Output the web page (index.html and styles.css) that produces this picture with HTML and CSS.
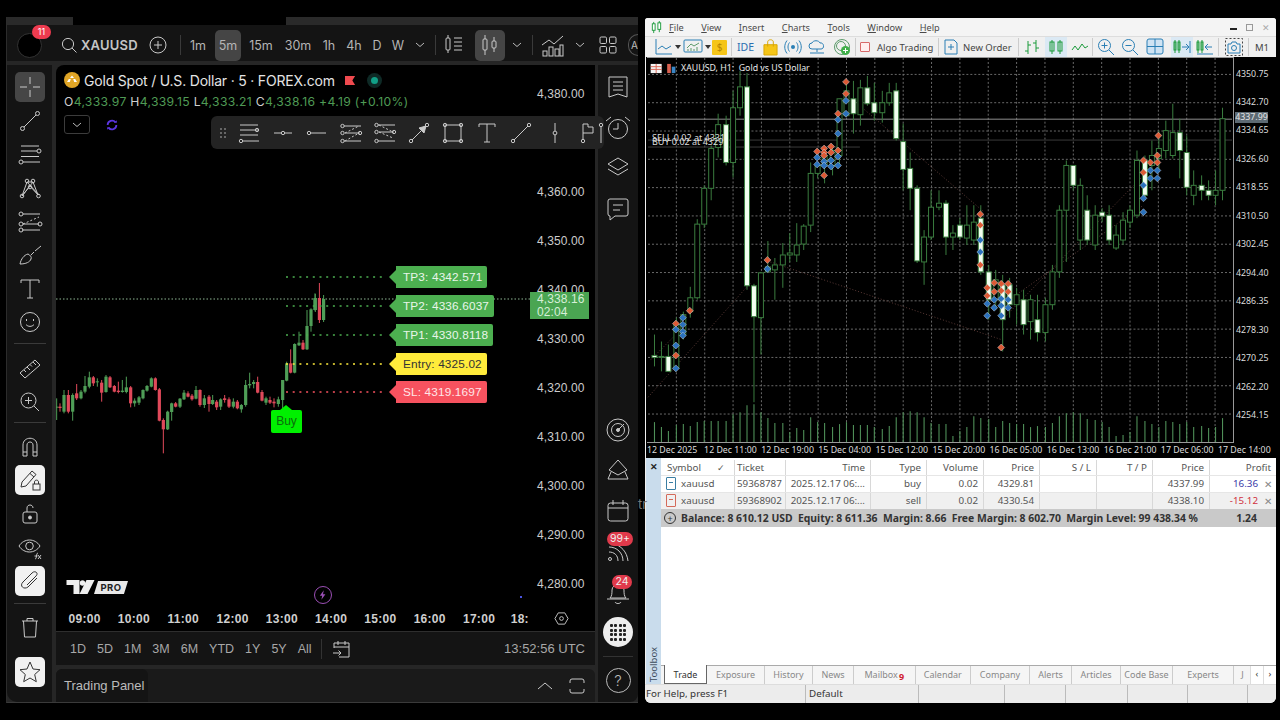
FILE: index.html
```html
<!DOCTYPE html>
<html lang="en">
<head>
<meta charset="utf-8">
<title>XAUUSD screens</title>
<link rel="stylesheet" href="styles.css">
</head>
<body>
<div class="screen">

<section class="tv">
  <div class="tv-strip"><span class="st a"></span><span class="st b"></span></div>
  <header class="tv-head">
    <div class="avatar"><span class="avatar-badge">11</span></div>
    <svg class="hi s20 ml-search" viewBox="0 0 20 20"><circle cx="9" cy="9" r="5.6"/><path d="M13 13l4.500 4.500"/></svg>
    <span class="symbol">XAUUSD</span>
    <svg class="hi s20 ml-plus" viewBox="0 0 20 20"><circle cx="10" cy="10" r="8"/><path d="M10 6v8M6 10h8"/></svg>
    <i class="hsep hs1"></i>
    <span class="tf w1m">1m</span><span class="tf on w5m">5m</span><span class="tf w15">15m</span><span class="tf w30">30m</span><span class="tf w1h">1h</span><span class="tf w4h">4h</span><span class="tf wd">D</span><span class="tf ww">W</span>
    <svg class="chev" viewBox="0 0 10 6"><path d="M1 1l4 3.500L9 1"/></svg>
    <i class="hsep hs2"></i>
    <svg class="hi s26 ml-bars" viewBox="0 0 26 26"><rect x="3" y="6" width="4" height="12" rx="1"/><path d="M5 3v3M5 18v3M11 6h8M11 10h8M11 14h8M11 18h8"/></svg>
    <span class="boxed"><svg class="hi s26" viewBox="0 0 26 26"><rect x="6" y="7" width="4" height="11" rx="1"/><rect x="15" y="9" width="4" height="7" rx="1"/><path d="M8 3v4M8 18v5M17 5v4M17 16v4"/></svg></span>
    <svg class="chev ml-c2" viewBox="0 0 10 6"><path d="M1 1l4 3.500L9 1"/></svg>
    <i class="hsep hs3"></i>
    <svg class="hi s26 ml-ind" viewBox="0 0 26 26"><path d="M2 13l7-5 5 4 9-8"/><rect x="3" y="19" width="4" height="5"/><rect x="9" y="15" width="4" height="9"/><rect x="15" y="17" width="4" height="7"/><rect x="20" y="13" width="3" height="11"/></svg>
    <svg class="chev ml-c3" viewBox="0 0 10 6"><path d="M1 1l4 3.500L9 1"/></svg>
    <svg class="hi s20 ml-grid" viewBox="0 0 20 20"><rect x="2" y="2" width="6.500" height="6.500" rx="1.200"/><rect x="11.500" y="2" width="6.500" height="6.500" rx="1.200"/><rect x="2" y="11.500" width="6.500" height="6.500" rx="1.200"/><rect x="11.500" y="11.500" width="6.500" height="6.500" rx="1.200"/></svg>
    <span class="auto-chip">A</span>
  </header>
  <div class="tv-body">
    <nav class="tools">
      <span class="tool t-box dark"><svg class="hi s26" viewBox="0 0 26 26"><path d="M13 3v7M13 16v7M3 13h7M16 13h7"/></svg></span>
      <span class="tool"><svg class="hi s26" viewBox="0 0 26 26"><path d="M7 19L19 7"/><circle cx="5.500" cy="20.500" r="2"/><circle cx="20.500" cy="5.500" r="2"/></svg></span>
      <span class="tool"><svg class="hi s26" viewBox="0 0 26 26"><path d="M4 5h18M4 10h16M4 15.500h18M6 21h17"/><circle cx="22" cy="10" r="2"/><circle cx="4" cy="21" r="2"/></svg></span>
      <span class="tool"><svg class="hi s26" viewBox="0 0 26 26"><path d="M5 21L10 7l6 0 5 13L13 11 5 21zM10 7L22 20M16 7L5 21"/><circle cx="5" cy="21" r="1.800"/><circle cx="10" cy="6" r="1.800"/><circle cx="16" cy="6" r="1.800"/><circle cx="21.500" cy="21" r="1.800"/><circle cx="13" cy="12" r="1.800"/></svg></span>
      <span class="tool"><svg class="hi s26" viewBox="0 0 26 26"><path d="M6 5h17M6 15h16M5 21h18"/><path class="dash" d="M6 15L22 8"/><circle cx="4" cy="5" r="2"/><circle cx="4" cy="15" r="2"/><circle cx="23" cy="15" r="2"/><circle cx="4" cy="21" r="2"/></svg></span>
      <span class="tool"><svg class="hi s26" viewBox="0 0 26 26"><path d="M3 22c1-5 4-9 8-10 2 1 4 3 3 5-1 3-5 5-11 5zM14 13l3-3M18 9l6-5"/></svg></span>
      <span class="tool"><svg class="hi s26" viewBox="0 0 26 26"><path d="M4 7V4h18v3M13 4v18M10 22h6"/></svg></span>
      <span class="tool"><svg class="hi s26" viewBox="0 0 26 26"><circle cx="13" cy="13" r="9.500"/><path d="M9 15.500c2 2.500 6 2.500 8 0"/><path d="M9.500 10v2M16.500 10v2"/></svg></span>
      <i class="tsep"></i>
      <span class="tool"><svg class="hi s26" viewBox="0 0 26 26"><path d="M3 18L18 5l5 5L8 23zM7 15l2 2M10 12l3 3M13 9.500l2 2M16 7l3 3"/></svg></span>
      <span class="tool"><svg class="hi s26" viewBox="0 0 26 26"><circle cx="11.500" cy="11.500" r="7.500"/><path d="M17 17l5 5M11.500 8v7M8 11.500h7"/></svg></span>
      <i class="tsep"></i>
      <span class="tool"><svg class="hi s26" viewBox="0 0 26 26"><path d="M6 22V11c0-9 14-9 14 0v11h-4V11c0-4-6-4-6 0v11zM6 18h4M16 18h4"/></svg></span>
      <span class="tool t-box light"><svg class="hi s26" viewBox="0 0 26 26"><path d="M4 20l1-5L15 4l4 3.500L9 19zM13 6.500l4 3.500"/><rect x="16" y="17" width="7" height="6"/><path d="M17.500 17v-2c0-2.500 4-2.500 4 0v2"/></svg></span>
      <span class="tool"><svg class="hi s26" viewBox="0 0 26 26"><rect x="6" y="11" width="14" height="11" rx="2"/><path d="M10 11V7c0-4 6-4 6 0"/><circle class="solid" cx="13" cy="16.500" r="1.500"/></svg></span>
      <span class="tool"><svg class="hi s26" viewBox="0 0 26 26"><path d="M2 11c5-8 16-8 21 0-5 8-16 8-21 0z"/><circle cx="12.500" cy="11" r="3.800"/><path d="M18 24c2 0 1-6 3-6M17.500 21h3M21 20l3 4M24 20l-3 4"/></svg></span>
      <span class="tool t-box light"><svg class="hi s26" viewBox="0 0 26 26"><path d="M10 17l9-9c3-3-1-6-4-3L6 14c-4 4 1 8 5 5l9-9" transform="rotate(0 13 13)"/></svg></span>
      <i class="tsep ts3"></i>
      <span class="tool"><svg class="hi s26" viewBox="0 0 26 26"><path d="M5 7h16M10 7V4.500h6V7M6.500 7l1 16h11l1-16"/></svg></span>
      <span class="tool-gap"></span>
      <span class="tool t-box light"><svg class="hi s26" viewBox="0 0 26 26"><path d="M13 3l3 7 7 .7-5.300 4.800 1.600 7.200L13 19l-6.300 3.700 1.600-7.200L3 10.700 10 10z"/></svg></span>
    </nav>

    <div class="centre">
      <div class="chart">
        <svg id="tvchart" class="canvas" viewBox="56 65 539 540"></svg>
        <div class="legend">
          <div class="legend-title"><span class="gold"><svg viewBox="0 0 16 16"><circle cx="8" cy="8" r="8" fill="#e0a526"/><path d="M8 3.500l2 2.500H6zM3 10l1.800-3h2l-1 3zM13 10l-1.800-3h-2l1 3z" fill="#fff"/></svg></span>Gold Spot / U.S. Dollar · 5 · FOREX.com<svg class="flag" viewBox="0 0 12 12"><path d="M0 1h11L8 6l3 5H0z"/></svg><span class="live"><i></i></span></div>
          <div class="ohlc"><b>O</b>4,333.97 <b>H</b>4,339.15 <b>L</b>4,333.21 <b>C</b>4,338.16 +4.19 (+0.10%)</div>
          <div class="legend-row"><span class="collapse"><svg class="chev" viewBox="0 0 10 6"><path d="M1 1l4 3.500L9 1"/></svg></span><svg class="sync" viewBox="0 0 16 16"><path d="M3 8a5 5 0 0 1 9-3M13 8a5 5 0 0 1-9 3"/><path class="tip" d="M10.500 5.500h3v-3zM5.500 10.500h-3v3z"/></svg></div>
        </div>
        <div class="axis-y">
          <span>4,380.00</span><span></span><span>4,360.00</span><span>4,350.00</span><span>4,340.00</span><span>4,330.00</span><span>4,320.00</span><span>4,310.00</span><span>4,300.00</span><span>4,290.00</span><span>4,280.00</span>
        </div>
        <div class="now-tag">4,338.16<br>02:04</div>
        <span class="tag green t1">TP3: 4342.571</span>
        <span class="tag green t2">TP2: 4336.6037</span>
        <span class="tag green t3">TP1: 4330.8118</span>
        <span class="tag yellow t4">Entry: 4325.02</span>
        <span class="tag red t5">SL: 4319.1697</span>
        <span class="buy">Buy</span>
        <div class="tv-logo"><svg viewBox="0 0 30 15"><path d="M0 0h13v14H7V5H0zM20 0h8l-7 14h-8z" fill="#eee"/><circle cx="16" cy="3" r="2.700" fill="#eee"/></svg><span>PRO</span></div>
        <span class="bolt"><svg viewBox="0 0 10 12"><path d="M6 0L1 7h3l-1 5 5-7H5z"/></svg></span>
        <i class="blue-dot"></i>
        <div class="float-bar">
          <span class="grip"></span>
          <svg class="hi fb" viewBox="0 0 24 24"><path d="M3 4h18M3 9h18M3 14h18M6 20h16"/><circle cx="20" cy="9" r="1.700"/><circle cx="4" cy="20" r="1.700"/></svg>
          <svg class="hi fb" viewBox="0 0 24 24"><path d="M3 12h7M14 12h7"/><circle cx="12" cy="12" r="1.700"/></svg>
          <svg class="hi fb" viewBox="0 0 24 24"><path d="M6 12h15"/><circle cx="4" cy="12" r="1.700"/></svg>
          <svg class="hi fb" viewBox="0 0 24 24"><path d="M5 5h17M6 12h15M5 20h17"/><path class="dash" d="M6 12L20 5M6 20l14-8"/><circle cx="3.500" cy="5" r="1.700"/><circle cx="3.500" cy="12" r="1.700"/><circle cx="21" cy="12" r="1.700"/><circle cx="3.500" cy="20" r="1.700"/></svg>
          <svg class="hi fb" viewBox="0 0 24 24"><path d="M5 4h17M6 11h15M5 20h17"/><path class="dash" d="M6 11l14 6M6 4l14 7"/><circle cx="3.500" cy="4" r="1.700"/><circle cx="3.500" cy="11" r="1.700"/><circle cx="21" cy="11" r="1.700"/><circle cx="3.500" cy="20" r="1.700"/></svg>
          <svg class="hi fb" viewBox="0 0 24 24"><path d="M5 19L19 5"/><path class="solid" d="M19 5l-7 2 5 5z"/><circle cx="4" cy="20" r="1.700"/><circle cx="20" cy="4" r="1.700"/></svg>
          <svg class="hi fb" viewBox="0 0 24 24"><rect x="4" y="4" width="16" height="16"/><circle cx="4" cy="4" r="1.700"/><circle cx="20" cy="4" r="1.700"/><circle cx="4" cy="20" r="1.700"/><circle cx="20" cy="20" r="1.700"/></svg>
          <svg class="hi fb" viewBox="0 0 24 24"><path d="M4 6V3h16v3M12 3v18M9 21h6"/></svg>
          <svg class="hi fb" viewBox="0 0 24 24"><path d="M5 19L19 5"/><circle cx="4" cy="20" r="1.700"/><circle cx="20" cy="4" r="1.700"/></svg>
          <svg class="hi fb" viewBox="0 0 24 24"><path d="M12 2v8M12 14v8"/><circle cx="12" cy="12" r="1.900"/></svg>
          <svg class="hi fb" viewBox="0 0 24 24"><path d="M6 3v15M6 3h5v3h5v6H6"/><circle cx="6" cy="20" r="1.700"/></svg>
          <svg class="hi fb cutbar" viewBox="0 0 10 24"><path d="M5 6v16"/><circle cx="5" cy="4" r="1.700"/></svg>
        </div>
      </div>
      <div class="axis-x">
        <span>09:00</span><span>10:00</span><span>11:00</span><span>12:00</span><span>13:00</span><span>14:00</span><span>15:00</span><span>16:00</span><span>17:00</span><span class="cut">18:</span>
        <svg class="hi hex" viewBox="0 0 16 16"><path d="M4.500 2h7L15 8l-3.500 6h-7L1 8z"/><circle cx="8" cy="8" r="2"/></svg>
      </div>
      <div class="ranges">
        <span class="r">1D</span><span class="r">5D</span><span class="r">1M</span><span class="r">3M</span><span class="r">6M</span><span class="r">YTD</span><span class="r">1Y</span><span class="r">5Y</span><span class="r">All</span>
        <i class="rsep"></i>
        <svg class="hi s20" viewBox="0 0 20 20"><path d="M3 9V4h15v14H8M3 8h15M7 2v4M14 2v4M2 14h8M7.500 11.500L10 14l-2.500 2.500"/></svg>
        <span class="clock">13:52:56 UTC</span>
      </div>
      <div class="panel">
        <span class="panel-tab">Trading Panel</span>
        <span class="grow"></span>
        <svg class="hi caret" viewBox="0 0 16 8"><path d="M1 7l7-6 7 6"/></svg>
        <svg class="hi max" viewBox="0 0 16 16"><path d="M1 5V3a2 2 0 0 1 2-2h10a2 2 0 0 1 2 2v2M1 11v2a2 2 0 0 0 2 2h10a2 2 0 0 0 2-2v-2"/></svg>
      </div>
    </div>

    <aside class="side">
      <span class="sitem"><svg class="hi s26" viewBox="0 0 26 26"><path d="M4 3h18v20l-9-3-9 3zM8 8h10M8 12h10M8 16h10"/></svg></span>
      <span class="sitem"><svg class="hi s26" viewBox="0 0 26 26"><circle cx="13" cy="14" r="9.500"/><path d="M13 8v6h-5M1 6l5-4M25 6l-5-4"/></svg></span>
      <span class="sitem"><svg class="hi s26" viewBox="0 0 26 26"><path d="M13 3l10 6-10 6-10-6zM3 14l10 6 10-6"/></svg></span>
      <span class="sitem"><svg class="hi s26" viewBox="0 0 26 26"><path d="M3 5a2 2 0 0 1 2-2h16a2 2 0 0 1 2 2v13a2 2 0 0 1-2 2H10l-5 4v-4H5a2 2 0 0 1-2-2zM8 9h10M8 14h7"/></svg></span>
      <span class="side-gap"></span>
      <span class="sitem"><svg class="hi s26" viewBox="0 0 26 26"><circle cx="13" cy="13" r="11"/><circle cx="13" cy="13" r="6.500"/><path d="M13 13l6-6"/><circle class="solid" cx="13" cy="13" r="1.500"/></svg></span>
      <span class="sitem"><svg class="hi s26" viewBox="0 0 26 26"><path d="M13 3l9 10-9 5-9-5zM6 15l-3 7h20l-3-7"/></svg></span>
      <span class="sitem"><svg class="hi s26" viewBox="0 0 26 26"><rect x="3" y="5" width="20" height="18" rx="2.500"/><path d="M3 10h20M8 2v5M18 2v5"/></svg><em class="next">tr</em></span>
      <span class="sitem"><svg class="hi s26" viewBox="0 0 26 26"><circle cx="5" cy="21" r="1.500"/><path d="M4 14c5 0 9 3 9 9M4 9c8 0 14 6 14 14M8 6c8 1 14 8 15 17"/></svg><b class="sbadge wide">99+</b></span>
      <span class="sitem"><svg class="hi s26" viewBox="0 0 26 26"><path d="M5 19c2-2 2-5 2-8 0-7 12-7 12 0 0 3 0 6 2 8zM2 20h22M10 23c1 2 5 2 6 0"/></svg><b class="sbadge">24</b></span>
      <span class="sitem"><span class="apps"><i></i><i></i><i></i><i></i><i></i><i></i><i></i><i></i><i></i><i></i><i></i><i></i><i></i><i></i><i></i><i></i></span></span>
      <i class="ssep"></i>
      <span class="help">?</span>
    </aside>
  </div>
</section>

<section class="mt">
  <div class="menu">
    <svg class="mt-logo" viewBox="0 0 14 14"><path d="M4 1v12M10 0v12" stroke="#1a9a3a"/><rect x="2.500" y="3" width="3" height="7" fill="#fff" stroke="#1a9a3a"/><rect x="8.500" y="2" width="3" height="7" fill="#fff" stroke="#1a9a3a"/></svg>
    <span class="m"><u>F</u>ile</span><span class="m"><u>V</u>iew</span><span class="m"><u>I</u>nsert</span><span class="m"><u>C</u>harts</span><span class="m"><u>T</u>ools</span><span class="m"><u>W</u>indow</span><span class="m"><u>H</u>elp</span>
    <span class="grow"></span>
    <span class="win-btns"><i class="min"></i><i class="rest"></i><em>✕</em></span>
  </div>
  <div class="tbar">
    <svg class="mi w18" viewBox="0 0 18 16"><path class="bl" d="M1 0v15h16"/><path class="bl" d="M3 10l4-3 4 3 5-3"/></svg><i class="dd"></i>
    <svg class="mi w20 m1" viewBox="0 0 20 16"><rect class="bl" x="1" y="1" width="18" height="12" rx="1"/><path class="gr" d="M4 9l4-4 3 2 5-3M5 12V10M8 12V9M11 12V10M14 12V8"/></svg><i class="dd"></i>
    <span class="coin">$</span>
    <i class="bsep b1"></i>
    <span class="ide">IDE</span>
    <svg class="mi w16 m2" viewBox="0 0 16 18"><path d="M1 6h14v11H1z" fill="#f5c518" stroke="#d9a400"/><path d="M5 8V3c0-3 6-3 6 0v5" fill="none" stroke="#d9a400"/></svg>
    <svg class="mi w18 sig" viewBox="0 0 18 16"><circle cx="9" cy="8" r="2" fill="#2a7fb5"/><path class="bl" d="M5.500 3.500c-2 2.500-2 6.500 0 9M12.500 3.500c2 2.500 2 6.500 0 9M3 1.500c-3 4-3 9 0 13M15 1.500c3 4 3 9 0 13"/></svg>
    <svg class="mi w18 m3" viewBox="0 0 18 16"><path class="bl" d="M4 10a3 3 0 0 1 0-6c1-3 7-3 8 0 4-1 5 6 1 6zM9 10v3M2 14h14"/></svg>
    <svg class="mi w18 m4" viewBox="0 0 18 18"><circle class="gr" cx="9" cy="9" r="7.500"/><circle class="gr" cx="8" cy="8" r="4.500"/><circle cx="12.500" cy="12.500" r="4.500" fill="#3fae49"/><path d="M12.500 10v5M10 12.500h5" stroke="#fff"/></svg>
    <i class="bsep b2"></i>
    <span class="algo-box"></span><span class="tb-text algo">Algo Trading</span>
    <i class="bsep b3"></i>
    <svg class="mi w14" viewBox="0 0 14 16"><path class="bl" d="M1 1h9l3 3v11H1zM7 5v6M4 8h6"/></svg><span class="tb-text order">New Order</span>
    <i class="bsep b4"></i>
    <svg class="mi w18" viewBox="0 0 18 16"><path class="gn" d="M5 2v13M2 12h3M5 6h3M13 1v12M10 4h3M13 9h3"/></svg>
    <span class="hl"><svg class="mi w18" viewBox="0 0 18 16"><path class="gn" d="M5 1v14M13 1v14"/><rect class="gn" x="3" y="3" width="4" height="9" fill="#dbe9f4"/><rect class="gn" x="11" y="3" width="4" height="9" fill="#dbe9f4"/></svg></span>
    <svg class="mi w18 m7" viewBox="0 0 18 16"><path class="gn" d="M1 11l3-4 3 4 4-6 3 4 3-2"/></svg>
    <i class="bsep b5"></i>
    <svg class="mi w18 m8" viewBox="0 0 18 18"><circle class="bl" cx="7.500" cy="7.500" r="6"/><path class="bl" d="M12 12l5 5M7.500 4.500v6M4.500 7.500h6"/></svg>
    <svg class="mi w18 m9" viewBox="0 0 18 18"><circle class="bl" cx="7.500" cy="7.500" r="6"/><path class="bl" d="M12 12l5 5M4.500 7.500h6"/></svg>
    <svg class="mi w18 m10" viewBox="0 0 18 18"><rect x="1" y="1" width="16" height="15" rx="2" fill="#cfe3f3" stroke="#2a7fb5"/><path class="bl" d="M9 1v15M1 8.500h16"/></svg>
    <span class="hl h2"><svg class="mi w18" viewBox="0 0 18 16"><path class="gn" d="M2 1v13M6 1v13"/><rect class="gn" x="1" y="3" width="2" height="8"/><rect class="gn" x="5" y="3" width="2" height="8"/><path class="bl" d="M9 8h6M13 5l3 3-3 3M17 2v12"/></svg></span>
    <svg class="mi w18 m9b" viewBox="0 0 18 16"><path class="gn" d="M2 1v13M6 1v13"/><rect class="gn" x="1" y="3" width="2" height="8"/><rect class="gn" x="5" y="3" width="2" height="8"/><path class="bl" d="M16 8h-6M12 5L9 8l3 3M1 15h16"/></svg>
    <i class="bsep b6"></i>
    <svg class="mi w18 m9c" viewBox="0 0 18 18"><rect x=".5" y=".5" width="17" height="17" fill="none" stroke="#444" stroke-dasharray="2 2"/><path class="bl" d="M3 6h3l1-2h4l1 2h3v9H3z"/><circle class="bl" cx="9" cy="10" r="2.500"/></svg>
    <i class="bsep b7"></i><span class="tb-text m-1">M1</span>
  </div>
  <div class="mt-chart-wrap">
    <div class="mt-chart">
      <svg id="mtchart" class="canvas" viewBox="647 57 587 386"></svg>
      <div class="chart-title"><svg viewBox="0 0 28 12"><rect x="0" y="1" width="12" height="10" fill="#f4f4f4"/><path d="M0 4h12M0 7h12M6 1v10" stroke="#d9604f"/><rect x="18" y="1" width="4" height="10" fill="#d9604f"/><rect x="23" y="4" width="4" height="7" fill="#3a86c5"/></svg><span>XAUUSD, H1:  Gold vs US Dollar</span></div>
      <div class="trade-text">SELL 0.02 at 4331<br>BUY 0.02 at 4329</div>
    </div>
    <div class="mt-axis">
      <span>4350.75</span><span>4342.70</span><span>4334.65</span><span>4326.60</span><span>4318.55</span><span>4310.50</span><span>4302.45</span><span>4294.40</span><span>4286.35</span><span>4278.30</span><span>4270.25</span><span>4262.20</span><span>4254.15</span>
      <b class="ask">4337.99</b>
    </div>
  </div>
  <div class="mt-times"><span>12 Dec 2025</span><span>12 Dec 11:00</span><span>12 Dec 19:00</span><span>15 Dec 04:00</span><span>15 Dec 12:00</span><span>15 Dec 20:00</span><span>16 Dec 05:00</span><span>16 Dec 13:00</span><span>16 Dec 21:00</span><span>17 Dec 06:00</span><span>17 Dec 14:00</span></div>
  <div class="toolbox">
    <aside class="tb-side"><span class="tb-close">✕</span><span class="tb-name">Toolbox</span></aside>
    <div class="tb-main">
      <div class="rows">
        <div class="row hd"><span class="l symcol">Symbol<em>✓</em></span><span class="l">Ticket</span><span>Time</span><span>Type</span><span>Volume</span><span>Price</span><span>S / L</span><span>T / P</span><span>Price</span><span class="pf">Profit</span></div>
        <div class="row"><span class="l sym"><i class="ticon b"></i>xauusd</span><span class="l">59368787</span><span>2025.12.17 06:...</span><span>buy</span><span>0.02</span><span>4329.81</span><span></span><span></span><span>4337.99</span><span class="pf blue">16.36<em>✕</em></span></div>
        <div class="row alt"><span class="l sym"><i class="ticon r"></i>xauusd</span><span class="l">59368902</span><span>2025.12.17 06:...</span><span>sell</span><span>0.02</span><span>4330.54</span><span></span><span></span><span>4338.10</span><span class="pf redt">-15.12<em>✕</em></span></div>
        <div class="row bal"><span class="plus">+</span><strong>Balance: 8 610.12 USD&nbsp; Equity: 8 611.36&nbsp; Margin: 8.66&nbsp; Free Margin: 8 602.70&nbsp; Margin Level: 99 438.34 %</strong><strong class="tot">1.24</strong></div>
      </div>
      <div class="blank"></div>
      <div class="tabs">
        <span class="tabt on">Trade</span><span class="tabt">Exposure</span><span class="tabt">History</span><span class="tabt">News</span><span class="tabt">Mailbox<b>9</b></span><span class="tabt">Calendar</span><span class="tabt">Company</span><span class="tabt">Alerts</span><span class="tabt">Articles</span><span class="tabt">Code Base</span><span class="tabt">Experts</span><span class="tabt cutt">J</span>
        <span class="navb">‹</span><span class="navb">›</span>
      </div>
    </div>
  </div>
  <div class="status"><span class="s1">For Help, press F1</span><span class="s2">Default</span><span class="s3"></span><span class="s4"></span><span class="s5"></span><span class="s6"></span><span class="s7"></span><span class="s8"></span></div>
</section>
</div>
<script src="chart.js"></script>
</body>
</html>
```
FILE: styles.css
```css
*{box-sizing:border-box}
html,body{margin:0;height:720px;overflow:hidden;background:#000}
.screen{display:flex;width:1280px;height:720px;padding-top:17px;font-family:Inter,"Liberation Sans",sans-serif}
.grow{flex:1}
.hi{fill:none;stroke:#c9c9c9;stroke-width:1;flex:none;display:block}
.hi .solid{fill:#c9c9c9}
.hi .dash{stroke-dasharray:2 2}
.s20{width:20px;height:20px}
.s26{width:26px;height:26px}
.canvas{position:absolute;left:0;top:0;width:100%;height:100%}

/* TradingView */
.tv{margin-left:6px;width:632px;height:686px;display:flex;flex-direction:column;background:#262626;border-left:1px solid #2c2c2c;border-bottom:1px solid #3a3a3a}
.tv-strip{height:8px;background:#000;display:flex;justify-content:space-between;flex:none}
.st{display:block;height:8px;background:#2a2a2a}
.st.a{width:66px}.st.b{width:352px}
.tv-head{height:36px;padding-top:4px;background:#141414;display:flex;align-items:center;color:#bdbdbd;position:relative;font-size:13px;flex:none}
.avatar{width:25px;height:25px;border-radius:50%;background:#000;border:1px solid #333;margin-left:10px;position:relative;flex:none}
.avatar-badge{position:absolute;left:14px;top:-9px;width:19px;height:14px;border-radius:7px;background:#ee3b4f;color:#fff;font-size:9px;line-height:14px;text-align:center}
.ml-search{margin-left:17px}
.symbol{font-weight:600;font-size:13px;margin-left:2px;width:56px;color:#c5c5c5;letter-spacing:.2px}
.ml-plus{margin-left:11px}
.hsep{width:1px;height:20px;background:#3a3a3a;flex:none}
.hs1{margin-left:12px}
.tf{flex:none;text-align:center;font-size:12.500px;color:#b5b5b5;height:31px;line-height:31px;border-radius:5px}
.w1m{width:34px}.w5m{width:26px;background:#454545;margin-right:3px}.w15{width:34px}.w30{width:40px}.w1h{width:22px}.w4h{width:28px}.wd{width:18px}.ww{width:24px;margin-right:5px}
.chev{width:10px;height:6px;fill:none;stroke:#bbb;stroke-width:1;flex:none;display:block}
.hs2{margin-left:10px}
.ml-bars{margin-left:7px}
.boxed{width:30px;height:31px;background:#454545;border-radius:5px;display:flex;align-items:center;justify-content:center;margin-left:6px;flex:none}
.ml-c2{margin-left:7px}
.hs3{margin-left:10px}
.ml-ind{margin-left:7px}
.ml-c3{margin-left:9px}
.ml-grid{margin-left:13px}
.auto-chip{margin-left:10px;width:10px;height:22px;border:1px solid #555;border-right:0;border-radius:11px 0 0 11px;font-size:10px;line-height:20px;padding-left:2px;overflow:hidden}
.tv-body{flex:1;display:flex;min-height:0;padding-top:4px;gap:3px}
.tools{width:45px;flex:none;background:#141414;display:flex;flex-direction:column;align-items:center;padding-top:7px;border-radius:0 0 0 10px;margin-right:1px}
.tool{height:33.600px;width:30px;display:flex;align-items:center;justify-content:center;flex:none}
.t-box{height:30px;border-radius:5px;margin:0 0 2px}
.t-box.dark{background:#464646}
.t-box.light{background:#f1f1f1;margin:1.500px 0 2px}
.t-box.light .hi{stroke:#333}
.tsep{width:32px;height:1px;background:#3a3a3a;flex:none;margin:4px 0 7px}
.ts3{margin:5px 0 6px}
.tool-gap{height:12px;flex:none}
.centre{width:539px;flex:none;display:flex;flex-direction:column}
.chart{position:relative;height:540px;background:#000;border-radius:8px 0 0 0;flex:none;color:#ddd}
.legend{position:absolute;left:8px;top:5px}
.legend-title{display:flex;align-items:center;font-size:14px;letter-spacing:-.2px;height:20px;color:#e4e4e4;white-space:nowrap}
.gold{width:16px;height:16px;margin-right:4px}
.gold svg{display:block;width:16px;height:16px}
.flag{width:11px;height:11px;margin-left:10px;fill:#f04a4f}
.live{width:15px;height:15px;border-radius:50%;background:#0e2a26;margin-left:11px;display:flex;align-items:center;justify-content:center}
.live i{width:7px;height:7px;border-radius:50%;background:#11a087}
.ohlc{font-size:12.200px;color:#4f9a55;margin-top:4px;white-space:nowrap;letter-spacing:.3px;height:15px;line-height:15px}
.ohlc b{font-weight:400;color:#cfcfcf}
.legend-row{display:flex;align-items:center;margin-top:6px;gap:15px}
.collapse{width:26px;height:19px;border:1px solid #3c3c3c;border-radius:3px;display:flex;align-items:center;justify-content:center}
.sync{width:14px;height:14px;fill:none;stroke:#5b36e0;stroke-width:2}
.sync .tip{fill:#5b36e0;stroke:none}
.axis-y{position:absolute;left:481px;top:4.500px;display:flex;flex-direction:column;font:12px "Liberation Sans",sans-serif;color:#ccc;letter-spacing:.1px}
.axis-y span{height:49.100px;line-height:49.100px;display:block}
.now-tag{position:absolute;left:474px;top:227px;width:59px;height:27px;background:#4aa552;color:#d6efd8;font:12px/12.500px "Liberation Sans",sans-serif;padding:1px 0 0 7px;letter-spacing:.1px}
.tag{position:absolute;left:340px;height:22px;line-height:22px;padding:0 5px 0 7px;font-family:"Liberation Sans",sans-serif;font-size:11.800px;border-radius:0 2px 2px 0;white-space:nowrap;letter-spacing:.15px}
.tag::before{content:"";position:absolute;left:-7px;top:4px;border:7px solid transparent;border-left:0}
.green{background:#4caf50;color:#e8f5e9}.green::before{border-right-color:#4caf50}
.yellow{background:#ffeb3b;color:#333}.yellow::before{border-right-color:#ffeb3b}
.red{background:#f7525f;color:#ffe6e8}.red::before{border-right-color:#f7525f}
.t1{top:201px}.t2{top:230px}.t3{top:259px}.t4{top:288px}.t5{top:316px}
.buy{position:absolute;left:215px;top:345px;width:31px;height:23px;background:#00f000;color:#0b6d0b;border-radius:2px;font:12px/23px "Liberation Sans",sans-serif;text-align:center}
.buy::before{content:"";position:absolute;left:9px;top:-5px;border:6px solid transparent;border-top:0;border-bottom:5px solid #00f000}
.tv-logo{position:absolute;left:10px;top:515px;display:flex;align-items:center}
.tv-logo svg{width:31px;height:15px;display:block}
.tv-logo span{display:block;background:#e8e8e8;color:#222;font-size:9.500px;font-weight:700;width:34px;height:13px;line-height:13px;text-align:center;clip-path:polygon(12% 0,100% 0,88% 100%,0 100%);margin-left:-3px;letter-spacing:.5px}
.bolt{position:absolute;left:258px;top:521px;width:18px;height:18px;border-radius:50%;border:1px solid #9b4fb5;display:flex;align-items:center;justify-content:center}
.bolt svg{width:8px;height:10px;fill:#9b4fb5}
.blue-dot{position:absolute;left:464px;top:531px;width:2px;height:2px;background:#4a55e0}
.float-bar{position:absolute;z-index:5;left:155px;top:51px;width:393px;height:33px;background:#232323;border-radius:6px;display:flex;align-items:center;padding-left:8px;overflow:hidden}
.grip{display:block;width:8px;height:12px;flex:none;margin-right:10px;background:radial-gradient(circle,#666 1px,transparent 1.300px) 0 0/4px 4px}
.fb{width:24px;height:24px;margin-right:10px}
.cutbar{width:10px;margin:0 0 0 -15px}
.axis-x{height:27px;padding-top:1px;background:#000;display:flex;align-items:center;font:700 12px "Liberation Sans",sans-serif;color:#cfcfcf;padding-left:4px;border-bottom:1px solid #2e2e2e;flex:none;letter-spacing:.3px}
.axis-x span{width:49.300px;text-align:center;display:block;flex:none}
.axis-x .cut{width:36px;text-align:left;padding-left:7px}
.hex{width:15px;height:15px;margin-left:14px}
.ranges{height:33px;background:#141414;display:flex;align-items:center;flex:none;padding-left:14px;font:12.500px "Liberation Sans",sans-serif;color:#a8a8a8}
.r{margin-right:11px;white-space:nowrap}
.rsep{width:1px;height:20px;background:#333;margin:0 9px 0 -2px}
.clock{margin-left:auto;margin-right:10px;font-size:13px}
.panel{flex:1;margin-top:4px;background:#1a1a1a;display:flex;align-items:center;padding-right:10px;min-height:0;border-radius:6px 6px 0 0}
.panel-tab{align-self:stretch;width:92px;background:#141414;color:#bbb;font:13px/34px "Liberation Sans",sans-serif;padding-left:8px;border-radius:6px 6px 0 0;white-space:nowrap}
.caret{width:16px;height:8px;margin-right:16px}
.max{width:16px;height:16px}
.side{flex:1;background:#141414;display:flex;flex-direction:column;align-items:center;padding-top:2px;border-radius:0 0 8px 0;position:relative}
.sitem{height:40.500px;width:38px;flex:none;display:flex;align-items:center;justify-content:center;position:relative}
.side-gap{height:180.500px;flex:none}
.next{position:absolute;left:39px;top:5px;color:#777;font-style:normal;font-size:13px}
.sbadge{position:absolute;top:3px;left:13px;height:14px;min-width:20px;padding:0 2px;background:#e03a4b;color:#eee;border-radius:7px;font-size:10.500px;font-weight:400;line-height:14px;text-align:center}
.sbadge.wide{left:8px;width:26px;top:1px}
.apps{width:30px;height:30px;border-radius:50%;background:#eee;display:grid;grid-template-columns:repeat(4,3px);gap:1.500px;justify-content:center;align-content:center}
.apps i{width:3px;height:3px;border-radius:1px;background:#222}
.ssep{width:30px;height:1px;background:#333;margin:3px 0 11px;flex:none}
.help{width:25px;height:25px;border-radius:50%;border:1px solid #bbb;color:#bbb;font-size:15px;font-weight:300;line-height:23px;text-align:center}

/* MetaTrader */
.mt{margin-left:7px;margin-top:1px;width:631px;height:685px;background:#f0f0f0;border-radius:3px 3px 6px 6px;display:flex;flex-direction:column;font-family:"Noto Sans","Liberation Sans",sans-serif;font-size:10px;color:#4a4a4a;overflow:hidden;flex:none}
.menu{height:18px;display:flex;align-items:center;flex:none;background:#f4f4f4;padding-left:5px}
.mt-logo{width:13px;height:13px;fill:none;margin-right:6px;flex:none}
.m{margin-right:17.500px;font-size:9.200px;flex:none}
.win-btns{display:flex;align-items:center;width:46px;gap:9px;height:18px}
.win-btns i{display:block}
.min{width:7px;height:2px;background:#222;margin-top:3px}
.rest{width:7px;height:7px;border:1px solid #999}
.win-btns em{font-style:normal;font-size:9px;color:#aaa}
.tbar{height:21px;display:flex;align-items:center;background:#f0f0f0;flex:none;padding-left:10px;border-top:1px solid #ddd}
.mi{flex:none;display:block;fill:none}
.w18{width:18px;height:16px}.w20{width:20px;height:16px}.w16{width:15px;height:17px}.w14{width:14px;height:16px}
.m4,.m8,.m9,.m10,.m9c{height:18px}
.bl{stroke:#2a7fb5;fill:none}.gr{stroke:#5c9a6a;fill:none}.gn{stroke:#1a9a3a;fill:none}
.dd{width:0;height:0;border:3.500px solid transparent;border-top:4px solid #333;border-bottom:0;margin-left:2px;flex:none}
.m1{margin-left:2px}
.coin{width:15px;height:15px;background:#f5c518;color:#b78500;font-size:10px;line-height:15px;text-align:center;margin-left:1px;flex:none;border-radius:1px}
.bsep{width:1px;height:18px;background:#ccc;flex:none}
.b1{margin:0 5px 0 4px}
.b2{margin:0 4px}
.b3{margin:0 5px}
.b4{margin:0 4px 0 8px}
.b5{margin:0 3px}
.b6{margin:0 6px 0 4px}
.b7{margin:0 6px 0 5px}
.ide{color:#2a6fb0;font-size:10.500px;width:16px;flex:none}
.m2{margin-left:10px}
.sig{margin-left:6px}
.m3{margin-left:6px}
.m4{margin-left:7px}
.algo-box{width:10px;height:10px;border:1px solid #d86a6a;background:#fff0f0;border-radius:1px;flex:none}
.tb-text{font-size:9.500px;color:#444;flex:none;white-space:nowrap}
.algo{margin-left:7px;width:56px}
.order{margin-left:5px;width:47px}
.hl{width:22px;height:20px;background:#dbe9f4;display:flex;align-items:center;justify-content:center;flex:none;margin-left:4px}
.m7{margin-left:4px}
.m8{margin-left:1px}
.m9{margin-left:6px}
.m10{margin-left:7px}
.h2{margin-left:7px}
.m9b{margin-left:3px}
.m-1{flex:none}
.mt-chart-wrap{display:flex;flex:none;height:386px;background:#000;padding-left:1px;margin-left:1px}
.mt-chart{position:relative;width:587px;height:386px;border-top:1px solid #999;border-right:1px solid #999;border-bottom:1px solid #999;flex:none;color:#e8e8e8;background:#000}
.chart-title{position:absolute;left:3px;top:4px;display:flex;align-items:center;gap:4px;font-size:8.800px;color:#eaeaea;white-space:pre}
.chart-title svg{width:27px;height:11px;display:block}
.trade-text{position:absolute;left:5px;top:78px;font-size:9px;line-height:3.500px;color:#ddd;white-space:nowrap}
.mt-axis{position:relative;flex:1;color:#ddd;font-size:8.800px;padding-top:9.500px;display:flex;flex-direction:column}
.mt-axis span{height:28.470px;line-height:14px;padding-left:2px;display:block;flex:none}
.ask{position:absolute;left:1px;top:55px;width:33px;height:11px;line-height:11px;background:#5d6a73;color:#e4e4e4;font-weight:400;text-align:center}
.mt-times{height:15px;flex:none;background:#000;display:flex;color:#ddd;font-size:8.800px;padding-left:1px;margin-left:1px;line-height:15px}
.mt-times span{width:57.100px;flex:none;display:block;white-space:nowrap}
.toolbox{flex:1;display:flex;min-height:0;margin-left:1px}
.tb-side{width:15px;background:#c9dcec;display:flex;flex-direction:column;align-items:center;justify-content:space-between;flex:none;padding:2px 0}
.tb-close{color:#222;font-size:9px;font-weight:700}
.tb-name{writing-mode:vertical-rl;transform:rotate(180deg);font-size:9.500px;color:#3a4a5a}
.tb-main{flex:1;display:flex;flex-direction:column;background:#fff;min-width:0}
.rows{flex:none;padding-top:2px;background:#fff}
.row{display:grid;grid-template-columns:74px 51px 85px 56px 57px 56px 57px 56px 57px 1fr;height:17px;align-items:stretch;line-height:16px;font-size:9.800px;color:#555}
.row.hd{height:15px;line-height:15px;color:#555}
.row>span{border-right:1px solid #d8d8d8;text-align:right;padding:0 5px 0 2px;white-space:nowrap;position:relative;overflow:hidden}
.row>span.l{text-align:left}
.row>span.pf{border-right:0}
.symcol{padding-left:6px!important}
.symcol em{position:absolute;left:56px;font-style:normal;font-size:9px}
.sym{padding-left:20px!important}
.ticon{position:absolute;left:5px;top:1px;width:10px;height:13px;border:1px solid #3b7ea3;border-radius:1px}
.ticon::after{content:"";position:absolute;left:2px;top:4px;width:4px;height:1px;background:#3b7ea3}
.ticon.r{border-color:#d46a5a}
.ticon.r::after{background:#d46a5a}
.row:not(.hd):not(.bal){border-top:1px solid #e6e6e6}
.alt{background:#f0f0f0}
.pf{padding-right:18px!important}
.hd .pf{padding-right:5px!important}
.pf em{position:absolute;right:4px;font-style:normal;color:#888;font-size:10px}
.blue{color:#3a3aa8!important}.redt{color:#d03040!important}
.row.bal{display:flex;background:#c9c9c9;color:#333;align-items:center;height:18px;border-top:0;font-size:10.400px}
.row.bal>.plus{width:12px;height:12px;border:1px solid #333;border-radius:50%;display:flex;align-items:center;justify-content:center;font-size:9px;line-height:9px;margin:0 5px 0 3px;flex:none;padding:0;overflow:visible}
.bal strong{font-weight:700;white-space:nowrap;display:block}
.bal .tot{margin-left:auto;margin-right:19px}
.blank{flex:1;background:#fff}
.tabs{height:19px;flex:none;background:#f5f5f5;border-top:1px solid #aaa;display:flex;align-items:stretch;font-size:9px;color:#888;padding-left:3px;position:relative}
.tabt{display:block;line-height:17px;text-align:center;border-right:1px solid #ccc;white-space:nowrap;flex:none}
.tabt:nth-child(2){width:58px}
.tabt:nth-child(3){width:48px}
.tabt:nth-child(4){width:41px}
.tabt:nth-child(5){width:61.500px}
.tabt:nth-child(6){width:55.500px}
.tabt:nth-child(7){width:59px}
.tabt:nth-child(8){width:42px}
.tabt:nth-child(9){width:49px}
.tabt:nth-child(10){width:52px}
.tabt:nth-child(11){width:61px}
.tabt b{color:#d02030;font-size:9px;margin-left:1px;vertical-align:-2px}
.tabt.on{background:#fff;color:#333;border:1px solid #666;border-top:0;width:43px;margin-top:-1px;line-height:19px;height:19px}
.tabt.cutt{width:17px;border:0;overflow:hidden}
.navb{position:absolute;top:0;width:13px;height:18px;background:#fff;text-align:center;line-height:16px;color:#333;border-left:1px solid #ddd}
.navb:nth-last-child(2){right:13px}.navb:last-child{right:0}
.status{height:19px;display:grid;grid-template-columns:161px 113px 86px 61px 62px 60px 60px 1fr;background:#ececec;flex:none;font-size:9.800px;color:#333;line-height:18px;border-top:1px solid #ddd}
.status span{display:block;border-right:1px solid #bbb;padding-left:1px;overflow:hidden;white-space:nowrap}
.status .s2{padding-left:3px}
.status .s8{border-right:0}
```
FILE: chart.js
```javascript
// Candle data read off the charts; coordinates are page pixels (TV in 3x units, origin 0,180).
var tv = [
[170,655,720,680,681,'g'],[180,670,695,680,684,'r'],[192,630,700,645,695,'g'],[205,630,700,645,695,'r'],[218,640,722,645,695,'g'],[230,612,660,640,655,'r'],[243,630,658,635,655,'g'],[255,588,640,618,635,'g'],[268,575,625,592,620,'g'],[280,588,618,592,610,'r'],[292,595,620,604,606,'g'],[305,600,665,608,638,'r'],[318,585,638,590,636,'g'],[330,588,624,592,622,'r'],[343,615,637,618,635,'r'],[355,605,640,632,636,'r'],[367,600,638,632,636,'g'],[379,590,640,622,636,'g'],[392,618,682,622,670,'r'],[404,655,680,662,670,'g'],[417,648,675,652,668,'g'],[429,628,658,630,655,'g'],[441,615,635,618,632,'g'],[454,592,622,595,620,'g'],[466,592,632,595,630,'r'],[478,624,724,628,722,'r'],[490,715,820,720,748,'r'],[503,692,750,695,748,'g'],[515,668,722,670,696,'g'],[527,666,682,670,680,'r'],[540,654,684,656,680,'g'],[552,630,660,638,658,'g'],[564,634,652,640,650,'r'],[576,642,662,647,658,'r'],[588,618,658,630,656,'g'],[600,628,680,630,675,'r'],[613,645,684,655,675,'g'],[627,645,695,650,672,'r'],[638,645,675,660,672,'g'],[650,660,690,665,682,'r'],[662,655,690,658,680,'g'],[674,645,668,655,660,'r'],[687,652,684,658,680,'r'],[700,655,685,665,680,'g'],[712,660,688,665,685,'r'],[724,672,698,675,688,'g'],[737,600,680,615,675,'g'],[749,578,625,612,616,'g'],[761,600,625,606,612,'g'],[773,590,640,606,638,'r'],[786,630,664,636,662,'r'],[798,650,675,655,668,'g'],[810,650,672,660,668,'r'],[822,655,682,665,670,'r'],[835,650,680,658,672,'g'],[848,600,690,600,660,'g'],[860,545,604,550,602,'g'],[872,508,580,550,578,'r'],[884,490,580,492,578,'g'],[897,455,498,488,496,'g'],[909,480,510,488,508,'r'],[921,390,510,438,508,'g'],[933,385,455,388,438,'g'],[945,340,392,355,390,'g']
];
var s = '';
function r(x, y, w, h, f) { return '<rect x="' + x + '" y="' + y + '" width="' + w + '" height="' + Math.max(h, 1) + '" fill="' + f + '"/>'; }
var G = '#4f9e57', R = '#e0495a';
function tvCandle(x, wt, wb, bt, bb, col) {
  return r(x - 0.5, wt, 1, wb - wt, col) + r(x - 1.6, bt, 3.2, bb - bt, col);
}
tv.forEach(function (c) {
  s += tvCandle(c[0] / 3, 180 + c[1] / 3, 180 + c[2] / 3, 180 + c[3] / 3, 180 + c[4] / 3, c[5] === 'g' ? G : R);
});
s += tvCandle(315.3, 294, 312, 298, 310, G) + tvCandle(319.4, 283, 323, 298, 320, R) + tvCandle(323.6, 295, 322, 299, 320, G);
function dl(x1, x2, y, col, d) { return '<line x1="' + x1 + '" x2="' + x2 + '" y1="' + y + '" y2="' + y + '" stroke="' + col + '" stroke-width="1.500" stroke-dasharray="' + (d || '2 4.700') + '"/>'; }
s = dl(56, 530, 299, '#5f7a62', '1.500 2') + s;
s += dl(286, 386, 277, '#4caf50') + dl(286, 386, 306, '#4caf50') + dl(286, 386, 335, '#4caf50') + dl(286, 386, 364, '#ffeb3b') + dl(286, 386, 392, '#f7525f');
document.getElementById('tvchart').innerHTML = s;

// MetaTrader H1 bars: wick top, wick bottom, body top, body bottom, white (bear) flag
var mt = [
[335,367,356,358,1],[342,372,357,358,0],[345,372,357,372,1],[318,372,325,369,0],[312,340,315,335,0],[287,318,298,312,0],[219,300,224,298,0],[185,228,188,224,0],[145,200,148,188,0],[113,157,124,147,0],[115,165,124,162,1],[90,177,107,162,0],[70,115,86,107,0],[72,290,86,286,1],[284,403,286,317,1],[272,355,273,318,0],[241,272,267,272,0],[258,300,265,270,0],[243,288,255,265,0],[233,262,253,255,0],[223,262,245,255,0],[224,250,226,244,0],[162,232,173,225,0],[162,178,165,173,0],[150,183,155,165,0],[145,175,150,165,0],[98,165,98,155,0],[80,115,90,115,0],[80,133,98,113,1],[79,125,87,114,0],[75,105,87,103,1],[82,120,102,112,1],[90,122,102,112,0],[82,105,92,102,0],[82,140,90,138,1],[123,190,141,169,1],[152,210,168,188,1],[185,263,188,261,1],[230,285,237,262,0],[190,240,207,237,0],[190,210,203,207,0],[200,255,203,237,1],[225,250,233,237,0],[218,240,225,237,1],[205,245,225,238,0],[205,245,222,240,0],[205,275,218,272,1],[265,320,272,300,1],[270,310,280,300,0],[275,352,285,320,1],[278,318,285,305,1],[288,325,295,305,0],[290,335,300,325,1],[295,340,300,322,0],[295,342,320,333,1],[298,342,305,333,0],[265,310,272,305,0],[205,278,210,272,0],[160,262,165,210,0],[165,190,165,185,1],[178,250,185,240,0],[195,245,210,240,1],[205,250,215,245,0],[208,222,212,216,1],[205,245,215,240,1],[225,250,235,248,0],[212,245,220,240,0],[205,228,210,222,0],[150,218,160,215,0],[155,200,160,195,1],[140,190,155,165,0],[130,170,148,158,0],[120,158,130,150,0],[103,158,132,155,0],[118,178,132,150,1],[135,195,152,187,1],[170,205,185,195,0],[175,200,185,190,1],[180,200,190,195,1],[170,205,190,195,0],[107,200,118,190,0]
];
var vol = [423,428,432,426,425,427,423,422,422,422,422,415,413,406,405,413,419,424,424,433,429,431,418,423,424,428,425,423,426,426,426,428,430,427,418,413,412,413,418,424,425,425,437,432,428,417,419,420,428,422,424,425,425,428,427,428,424,417,414,413,414,420,421,423,428,437,436,433,417,422,425,428,422,423,425,423,428,427,429,428,419];
var vx = function (i) { return 653.2 + i * 7.135; };
var m = '';
function ln(a, b, c, d, col, w, da) { return '<line x1="' + a + '" y1="' + b + '" x2="' + c + '" y2="' + d + '" stroke="' + col + '" stroke-width="' + (w || 1) + '"' + (da ? ' stroke-dasharray="' + da + '"' : '') + '/>'; }
var i;
for (i = 0; i < 13; i++) { m += ln(647, 73.5 + i * 28.45, 1234, 73.5 + i * 28.45, '#6a6a6a', 1, '2 2'); }
for (i = 0; i < 20; i++) { m += ln(675.5 + i * 28.5, 57, 675.5 + i * 28.5, 443, '#6a6a6a', 1, '2 2'); }
m += ln(647, 118.5, 1234, 118.5, '#8f8f8f') + ln(647, 146.5, 860, 146.5, '#3a3a3a') + ln(647, 139.5, 1234, 139.5, '#3a3a3a');
// faint trade links
[[647, 398, 750, 283], [770, 262, 1002, 340], [860, 105, 985, 212], [1010, 300, 1145, 205], [650, 360, 680, 330], [1003, 320, 1150, 170]].forEach(function (d) {
  m += ln(d[0], d[1], d[2], d[3], '#5b3a36', 1, '1 2');
});
var W = '#3a7d3f';
vol.forEach(function (t, k) {
  var x = Math.round(vx(k)) + 0.5;
  m += ln(x, t, x, 443, '#4f8f58', 1.100);
});
mt.forEach(function (c, k) {
  var x = Math.round(vx(k)) + 0.5;
  m += ln(x, c[0], x, c[1], W, 1);
  var h = Math.max(c[3] - c[2], 1);
  m += '<rect x="' + (x - 2.500) + '" y="' + c[2] + '" width="5" height="' + h + '" fill="' + (c[4] ? '#f2fff0' : '#000') + '" stroke="' + W + '"/>';
});
function dia(x, y, col) {
  return '<path d="M' + x + ' ' + (y - 3.500) + 'l3.500 3.500-3.500 3.500-3.500-3.500z" fill="' + col + '" stroke="rgba(220,225,235,.55)" stroke-width=".8"/>';
}
var Rd = '#dd5a35', Bl = '#2b72bd';
var marks = [
[675,324,Rd],[675,330,Bl],[682,318,Bl],[682,325,Bl],[682,332,Bl],[682,336,Bl],[689,311,Rd],[675,346,Bl],[675,356,Rd],[675,369,Bl],
[767,260,Rd],[767,269,Bl],[817,151,Rd],[817,157,Bl],[817,164,Bl],[824,148,Rd],[824,152,Rd],[824,155,Rd],[824,161,Bl],[824,165,Bl],[824,175,Rd],[831,146,Rd],[831,152,Rd],[831,160,Bl],[831,166,Bl],[838,150,Rd],[838,156,Bl],[838,165,Bl],
[838,113,Rd],[838,119,Bl],[838,133,Bl],[846,81,Rd],[846,93,Rd],[846,100,Bl],[846,113,Bl],
[981,214,Rd],[981,225,Rd],[981,240,Bl],[981,252,Bl],[981,265,Rd],
[988,288,Rd],[988,296,Rd],[988,304,Bl],[988,316,Bl],[995,283,Rd],[995,292,Rd],[995,300,Bl],[995,308,Bl],[1002,284,Rd],[1002,291,Rd],[1002,299,Bl],[1002,306,Bl],[1002,316,Bl],[1002,348,Rd],[1009,284,Rd],[1009,292,Rd],[1009,300,Bl],[1009,308,Bl],
[1145,160,Rd],[1145,172,Rd],[1145,185,Bl],[1145,198,Bl],[1145,212,Bl],[1152,162,Rd],[1152,170,Bl],[1152,178,Bl],[1159,155,Rd],[1159,162,Rd],[1159,170,Bl],[1159,178,Bl],[1160,135,Rd]
];
marks.forEach(function (p) { m += dia(p[0], p[1], p[2]); });
document.getElementById('mtchart').innerHTML = m;
```
